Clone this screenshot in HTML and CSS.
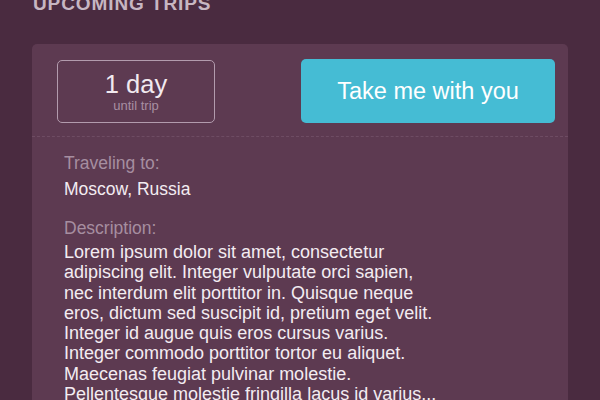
FILE: index.html
```html
<!DOCTYPE html>
<html>
<head>
<meta charset="utf-8">
<link rel="stylesheet" href="styles.css">
</head>
<body>
<div class="page">
  <h1 class="title">UPCOMING TRIPS</h1>
  <div class="card">
    <div class="card-top">
      <div class="countdown">
        <div class="count">1 day</div>
        <div class="count-sub">until trip</div>
      </div>
      <button class="take">Take me with you</button>
    </div>
    <div class="card-body">
      <div class="label">Traveling to:</div>
      <div class="value">Moscow, Russia</div>
      <div class="label label-gap">Description:</div>
      <p class="desc">Lorem ipsum dolor sit amet, consectetur<br>adipiscing elit. Integer vulputate orci sapien,<br>nec interdum elit porttitor in. Quisque neque<br>eros, dictum sed suscipit id, pretium eget velit.<br>Integer id augue quis eros cursus varius.<br>Integer commodo porttitor tortor eu aliquet.<br>Maecenas feugiat pulvinar molestie.<br>Pellentesque molestie fringilla lacus id varius...</p>
    </div>
  </div>
</div>
</body>
</html>
```
FILE: styles.css
```css
html, body {
  margin: 0;
  padding: 0;
  background: #4a2b40;
  height: 100%;
  overflow: hidden;
}
body {
  font-family: "Liberation Sans", Arial, sans-serif;
}
.page {
  padding: 0 32px;
}
.title {
  margin: 0;
  margin-top: -7px;
  height: 51px;
  padding-left: 1px;
  font-size: 19px;
  font-weight: bold;
  letter-spacing: 0.9px;
  color: #c7b6c2;
  line-height: 22px;
}
.card {
  background: #5d3a51;
  border-radius: 5px;
  height: 400px;
}
.card-top {
  display: flex;
  justify-content: space-between;
  align-items: center;
  padding: 15px 13px 13px 25px;
  border-bottom: 1px dashed #6e4c63;
}
.countdown {
  box-sizing: border-box;
  width: 158px;
  height: 63px;
  border: 1px solid #b29bad;
  border-radius: 5px;
  display: flex;
  flex-direction: column;
  align-items: center;
  justify-content: center;
  color: #f1e9ef;
}
.count {
  font-size: 25.5px;
  line-height: 26px;
  margin-top: 2px;
}
.count-sub {
  font-size: 13px;
  line-height: 15px;
  color: #a88fa2;
  margin-top: 1px;
}
.take {
  width: 254px;
  height: 64px;
  border: none;
  border-radius: 5px;
  background: #45bcd4;
  color: #ffffff;
  font-family: "Liberation Sans", Arial, sans-serif;
  font-size: 23.5px;
  padding: 0;
}
.card-body {
  padding: 16px 32px 0 32px;
}
.label {
  font-size: 17.5px;
  line-height: 20px;
  color: #a68ea0;
}
.label-gap {
  margin-top: 19px;
}
.value {
  font-size: 17.5px;
  line-height: 20px;
  color: #f3ecf1;
  margin-top: 6px;
}
.desc {
  margin: 4px 0 0 0;
  font-size: 18px;
  line-height: 20.3px;
  color: #f3ecf1;
}
```
